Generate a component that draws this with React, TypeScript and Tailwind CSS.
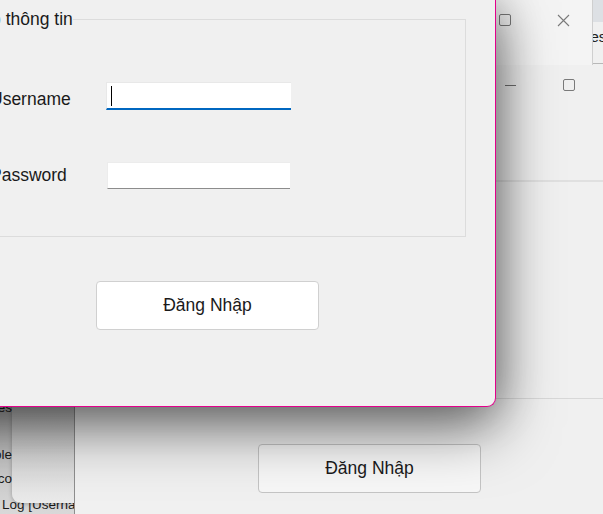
import React from 'react'

const font = { fontFamily: '"Liberation Sans", Arial, sans-serif' }

function Square({ className = '' }: { className?: string }) {
  return <div className={`h-[12px] w-[12px] rounded-[2px] border border-[#7a7a7a] ${className}`} />
}

function Close() {
  return (
    <svg width="13" height="13" viewBox="0 0 13 13" className="text-[#7a7a7a]">
      <path d="M1 1 L12 12 M12 1 L1 12" stroke="currentColor" strokeWidth="1.1" fill="none" />
    </svg>
  )
}

export default function App() {
  return (
    <div className="relative h-[514px] w-[603px] overflow-hidden bg-[#f0f0f0] text-[#1a1a1a]" style={font}>
      {/* far right window behind everything */}
      <div className="absolute left-[580px] top-0 h-[64px] w-[40px] border-b border-[#b8b8b8] bg-[#f0f0f0]">
        <div className="h-[22px] bg-[#dde0e4]" />
        <div className="pl-[3px] pt-[7px] text-[15px] leading-none text-[#202020]">Tes</div>
      </div>

      {/* window A: title bar strip */}
      <div className="absolute left-[470px] top-[-10px] flex h-[76px] w-[123px] items-start rounded-tr-[9px] border-r border-b border-[#cfcfcf] bg-[#f4f4f4] pt-[24px]">
        <Square className="ml-[29px]" />
        <div className="ml-[46px]">
          <Close />
        </div>
      </div>

      {/* window B */}
      <div className="absolute left-[470px] top-[65px] h-[334px] w-[150px] border-b border-[#d8d8d8] bg-[#f0f0f0]">
        <div className="flex h-[117px] items-start border-b-2 border-[#e0e0e0] pt-[14px]">
          <div className="ml-[35px] mt-[6px] h-px w-[11px] bg-[#707070]" />
          <Square className="ml-[47px]" />
        </div>
      </div>

      {/* window C */}
      <div className="absolute left-[75px] top-[399px] h-[130px] w-[545px] bg-[#f0f0f0]">
        <button className="ml-[183px] mt-[45px] h-[49px] w-[223px] rounded-[4px] border border-[#c4c4c4] bg-[#f7f7f7] text-[17.5px]">
          Đăng Nhập
        </button>
      </div>

      {/* window D */}
      <div className="absolute left-[-10px] top-[399px] h-[130px] w-[85px] overflow-hidden border-r border-[#8e8e8e] bg-gradient-to-b from-[#b0b0b0] to-[#dedede] text-[13.5px] leading-none">
        <div className="flex w-[22px] flex-col items-end whitespace-nowrap pt-[2px]">
          <span>Tables</span>
          <span className="mt-[33px]">Console</span>
          <span className="mt-[11px]">tco</span>
          <span className="mt-[12px] self-start pl-[12px]">Log [Username]</span>
        </div>
        <div className="absolute left-[22px] top-0 h-[104px] w-[62px] rounded-bl-[9px] bg-gradient-to-b from-[#bdbdbd] to-[#ebebeb] shadow-[0_1px_4px_rgba(0,0,0,0.25)]" />
      </div>

      {/* front window */}
      <div className="absolute left-[-100px] top-0 h-[407px] w-[596px] rounded-br-[9px] border-r border-b border-[#e3008c] bg-[#f0f0f0] pl-[40px] pt-[19px] shadow-[0_0_45px_rgba(0,0,0,0.3),0_22px_60px_rgba(0,0,0,0.5)]">
        <div className="relative h-[218px] w-[526px] border border-[#dcdcdc] pl-[49px] pt-[62px]">
          <span className="absolute left-[18px] top-[-11px] bg-[#f0f0f0] text-[17.5px] leading-[20px]">Nhập thông tin</span>
          <div className="flex items-start">
            <span className="mt-[4px] w-[116px] text-[17.5px] leading-[26px]">Username</span>
            <div className="relative h-[28px] w-[185px] border-t border-l border-[#e8e8e8] border-b-2 border-b-[#0067c0] bg-white">
              <div className="absolute left-[4px] top-[3px] h-[20px] w-px bg-black" />
            </div>
          </div>
          <div className="mt-[50px] flex items-start">
            <span className="w-[116px] text-[17.5px] leading-[26px]">Password</span>
            <div className="ml-[1px] h-[27px] w-[183px] border-t border-l border-[#ececec] border-b border-b-[#8c8c8c] bg-white" />
          </div>
        </div>
        <button className="ml-[156px] mt-[44px] h-[49px] w-[223px] rounded-[4px] border border-[#d0d0d0] bg-white text-[17.5px]">
          Đăng Nhập
        </button>
      </div>
    </div>
  )
}
